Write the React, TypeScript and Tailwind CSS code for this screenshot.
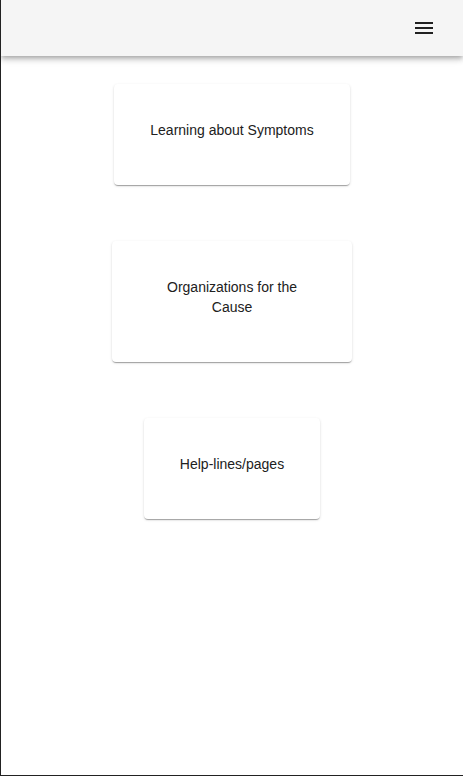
import React from 'react';

const cards = ['Learning about Symptoms', 'Organizations for the Cause', 'Help-lines/pages'];

const MenuIcon: React.FC = () => (
  <svg viewBox="0 0 24 24" className="w-6 h-6 fill-[#212121]">
    <path d="M3 18h18v-2H3zm0-5h18v-2H3zm0-7v2h18V6z" />
  </svg>
);

const App: React.FC = () => {
  return (
    <div className="h-[776px] bg-white border-l border-b border-[#222] font-['Liberation_Sans',Arial,sans-serif] text-[#212121] overflow-hidden">
      {/* App bar */}
      <header className="relative z-10 h-14 bg-[#f5f5f5] flex items-center justify-end pr-[27px] shadow-[0_2px_4px_-1px_rgba(0,0,0,0.2),0_4px_5px_0_rgba(0,0,0,0.14),0_1px_10px_0_rgba(0,0,0,0.12)]">
        <button className="flex items-center justify-center">
          <MenuIcon />
        </button>
      </header>

      {/* Topic cards */}
      <main className="flex flex-col items-center">
        {cards.map((label) => (
          <div
            key={label}
            className="my-7 max-w-[240px] bg-white rounded px-9 pt-9 pb-[45px] text-center text-sm leading-5 shadow-[0_2px_1px_-1px_rgba(0,0,0,0.2),0_1px_1px_0_rgba(0,0,0,0.14),0_1px_3px_0_rgba(0,0,0,0.12)]"
          >
            {label}
          </div>
        ))}
      </main>
    </div>
  );
};

export default App;
